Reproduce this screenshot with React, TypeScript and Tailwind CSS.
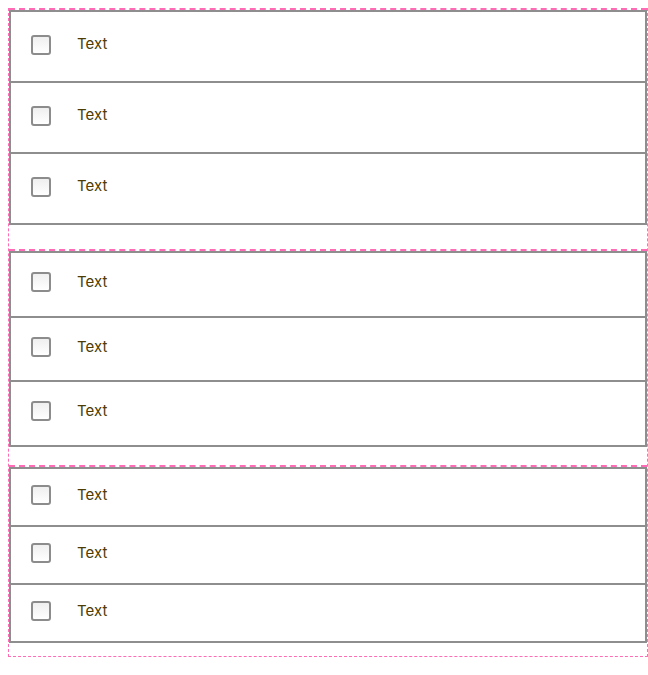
import React from "react";

const sections = [
  { rowH: "h-[71px]", gap: "mb-[24px]" },
  { rowH: "h-[64.5px]", gap: "mb-[18.5px]" },
  { rowH: "h-[58px]", gap: "mb-[13px]" },
];

const Checkbox = () => (
  <div className="w-5 h-5 shrink-0 rounded-[3px] border-2 border-[#8c8c8c] bg-gradient-to-b from-[#efefef] to-white" />
);

const App = () => {
  return (
    <div
      className="ml-2 mt-2 w-[640px] border-x border-b border-dashed border-[#ff6cb5] bg-white"
      style={{ fontFamily: "Inter, 'Noto Sans', sans-serif" }}
    >
      {sections.map((s, i) => (
        <div key={i} className={`border-t-2 border-dashed border-[#ff6cb5] ${s.gap}`}>
          <div className="border-2 border-b-0 border-[#8e8e8e]">
            {[1, 2, 3].map((r) => (
              <div
                key={r}
                className={`${s.rowH} flex items-center pl-5 pb-1 border-b-2 border-[#8e8e8e]`}
              >
                <Checkbox />
                <span className="ml-[26px] text-[15px] text-[#4f3c00]">Text</span>
              </div>
            ))}
          </div>
        </div>
      ))}
    </div>
  );
};

export default App;
